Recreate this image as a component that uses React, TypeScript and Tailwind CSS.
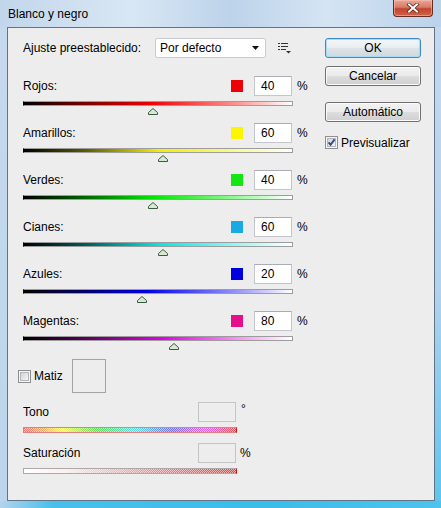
import React from "react";

type Row = { label: string; value: number; swatch: string; grad: string };

const rows: Row[] = [
  { label: "Rojos:", value: 40, swatch: "bg-[#ec0008]", grad: "bg-[linear-gradient(to_right,#000_0%,#6a0000_20%,#f00000_47%,#ff8c8c_78%,#fff_100%)]" },
  { label: "Amarillos:", value: 60, swatch: "bg-[#fbf500]", grad: "bg-[linear-gradient(to_right,#000_0%,#5a5600_22%,#f2ee00_50%,#fbf98c_78%,#fff_100%)]" },
  { label: "Verdes:", value: 40, swatch: "bg-[#14e614]", grad: "bg-[linear-gradient(to_right,#000_0%,#005800_20%,#00e600_48%,#9cf89c_80%,#fff_100%)]" },
  { label: "Cianes:", value: 60, swatch: "bg-[#1aa9e2]", grad: "bg-[linear-gradient(to_right,#000_0%,#005656_22%,#00e6e6_50%,#98f8f8_80%,#fff_100%)]" },
  { label: "Azules:", value: 20, swatch: "bg-[#0000dc]", grad: "bg-[linear-gradient(to_right,#000_0%,#00005e_20%,#0000e6_46%,#9898fa_80%,#fff_100%)]" },
  { label: "Magentas:", value: 80, swatch: "bg-[#e6108a]", grad: "bg-[linear-gradient(to_right,#000_0%,#560056_22%,#e600e6_52%,#f8a0f8_82%,#fff_100%)]" },
];

function Thumb({ value }: { value: number }) {
  const frac = (value + 200) / 500;
  return (
    <div className="relative h-[7px] mt-[2px] w-[270px]">
      <svg
        className="absolute top-0"
        style={{ left: Math.round(frac * 270 - 5) }}
        width="10"
        height="7"
        viewBox="0 0 10 7"
      >
        <path d="M5 0.5 L9.5 4.5 V6.5 H0.5 V4.5 Z" fill="#d6ead2" stroke="#3c5a40" />
      </svg>
    </div>
  );
}

function CheckBox({ checked, id }: { checked?: boolean; id: string }) {
  return (
    <svg width="13" height="13" viewBox="0 0 13 13" className="shrink-0">
      <defs>
        <linearGradient id={id} x1="0" y1="0" x2="1" y2="1">
          <stop offset="0" stopColor="#cfd3d8" />
          <stop offset="1" stopColor="#f6f6f6" />
        </linearGradient>
      </defs>
      <rect x="0.5" y="0.5" width="12" height="12" fill="#f5f5f5" stroke="#8f8f8f" />
      <rect x="2.5" y="2.5" width="8" height="8" fill={`url(#${id})`} stroke="#b4b6b9" />
      {checked && (
        <path d="M3.6 6.3 L5.6 8.8 L9.6 3.4" fill="none" stroke="#304a8c" strokeWidth="1.9" />
      )}
    </svg>
  );
}

function Button({ label, primary }: { label: string; primary?: boolean }) {
  return (
    <div
      className={
        primary
          ? "h-[20px] w-[96px] flex items-center justify-center rounded-[3px] border border-[#3c8ccc] shadow-[inset_0_0_0_1px_#a8dcf6] bg-[linear-gradient(to_bottom,#f4f6f8_0%,#eaedf0_48%,#dde3e8_52%,#cfd8df_100%)]"
          : "h-[20px] w-[96px] flex items-center justify-center rounded-[3px] border border-[#707070] shadow-[inset_0_0_0_1px_#fbfbfb] bg-[linear-gradient(to_bottom,#f2f2f2_0%,#ebebeb_48%,#dddddd_52%,#cfcfcf_100%)]"
      }
    >
      <span className="text-[12px] leading-none text-black">{label}</span>
    </div>
  );
}

function SliderBlock({ row }: { row: Row }) {
  return (
    <div className="flex flex-col mb-[8px]">
      <div className="flex items-center h-[20px] w-[284px]">
        <span className="flex-1 text-[12px] text-black">{row.label}</span>
        <div className={`w-[12px] h-[12px] ${row.swatch}`} />
        <div className="ml-[11px] w-[38px] h-[20px] bg-white border border-[#c3c7cd] border-t-[#abadb3] flex items-center pl-[6px] text-[12px] text-black">
          {row.value}
        </div>
        <span className="ml-[5px] w-[10px] text-[12px] text-black">%</span>
      </div>
      <div className={`mt-[5px] h-[5px] w-[270px] border border-[#9d9d9d] border-l-black ${row.grad}`} />
      <Thumb value={row.value} />
    </div>
  );
}

function HueBar() {
  return (
    <div className="relative w-[214px] h-[6px] border border-[#e08080] border-r-[#c81818] bg-[linear-gradient(to_right,#f07070_0%,#f4f060_18%,#60e060_35%,#60e0e0_52%,#7070f4_70%,#f060f0_86%,#e85050_100%)]">
      <div className="absolute inset-0 bg-[repeating-conic-gradient(rgba(255,255,255,0.55)_0_25%,transparent_0_50%)] bg-[length:2px_2px]" />
    </div>
  );
}

function SatBar() {
  return (
    <div className="relative w-[214px] h-[6px] border border-[#b0a8a8] border-r-[#c41818] bg-[linear-gradient(to_right,#ffffff_0%,#fbeaea_20%,#e89090_60%,#d84848_100%)]">
      <div className="absolute inset-0 bg-[repeating-conic-gradient(rgba(255,255,255,0.55)_0_25%,transparent_0_50%)] bg-[length:2px_2px]" />
    </div>
  );
}

export default function App() {
  return (
    <div className="w-[441px] h-[508px] flex flex-col overflow-hidden font-['Liberation_Sans',Arial,sans-serif] bg-[linear-gradient(to_right,#c2d6eb_0%,#d8e7f4_30%,#bdd3ea_52%,#d4e4f3_74%,#bad2ea_100%)]">
      {/* Title bar */}
      <div className="h-[27px] flex items-start shrink-0">
        <div className="flex-1 h-[27px] flex items-center pl-[8px]">
          <span className="text-[12px] text-black">Blanco y negro</span>
        </div>
        <div className="mr-[8px] w-[40px] h-[17px] rounded-b-[4px] border border-t-0 border-[#6b2a22] bg-[linear-gradient(to_bottom,#e8a898_0%,#d87a66_45%,#c2442e_55%,#d0634a_100%)] shadow-[inset_0_0_0_1px_rgba(255,200,190,0.5)] flex items-center justify-center">
          <svg width="14" height="10" viewBox="0 0 14 10">
            <path d="M3 1.5 L11 8.5 M11 1.5 L3 8.5" stroke="#5a1d14" strokeWidth="3.4" strokeLinecap="square" />
            <path d="M3 1.5 L11 8.5 M11 1.5 L3 8.5" stroke="#ffffff" strokeWidth="2" strokeLinecap="square" />
          </svg>
        </div>
      </div>

      {/* Middle */}
      <div className="flex h-[474px] shrink-0">
        <div className="w-[7px] bg-[linear-gradient(to_bottom,#c6d9ec,#bcd5ec)]" />
        <div className="w-[428px] h-[474px] border border-[#627489] bg-[#ededed] pl-[15px] pt-[10px] flex">
          {/* Left column */}
          <div className="w-[284px] flex flex-col">
            <div className="flex items-center h-[20px]">
              <span className="w-[132px] text-[12px] text-black">Ajuste preestablecido:</span>
              <div className="w-[111px] h-[20px] bg-white border border-[#c8cbd0] rounded-[2px] flex items-center pl-[4px] pr-[6px]">
                <span className="flex-1 text-[12px] text-black">Por defecto</span>
                <svg width="7" height="4" viewBox="0 0 7 4">
                  <path d="M0 0 H7 L3.5 4 Z" fill="#111" />
                </svg>
              </div>
              <svg width="13" height="11" viewBox="0 0 13 11" className="ml-[12px]">
                <rect x="0" y="0" width="2" height="1" fill="#333" />
                <rect x="3" y="0" width="7" height="1" fill="#333" />
                <rect x="0" y="3" width="2" height="1" fill="#333" />
                <rect x="3" y="3" width="7" height="1" fill="#333" />
                <rect x="0" y="6" width="2" height="1" fill="#333" />
                <rect x="3" y="6" width="5" height="1" fill="#333" />
                <path d="M8 8 H13 L10.5 10.5 Z" fill="#333" />
              </svg>
            </div>

            <div className="mt-[18px] flex flex-col">
              {rows.map((r) => (
                <SliderBlock key={r.label} row={r} />
              ))}
            </div>

            {/* Matiz */}
            <div className="mt-[1px] ml-[-5px] flex items-center h-[34px]">
              <CheckBox id="cbMatiz" />
              <span className="ml-[3px] w-[38px] text-[12px] text-black">Matiz</span>
              <div className="w-[34px] h-[34px] border border-[#a3a3a3]" />
            </div>

            {/* Tono */}
            <div className="mt-[9px] flex items-center h-[20px]">
              <span className="w-[175px] text-[12px] text-black">Tono</span>
              <div className="w-[38px] h-[20px] border border-[#c4c4c4] bg-[#ededed]" />
              <span className="ml-[5px] self-start text-[12px] leading-[14px] text-black">°</span>
            </div>
            <div className="mt-[5px]">
              <HueBar />
            </div>

            {/* Saturación */}
            <div className="mt-[10px] flex items-center h-[20px]">
              <span className="w-[175px] text-[12px] text-black">Saturación</span>
              <div className="w-[38px] h-[20px] border border-[#c4c4c4] bg-[#ededed]" />
              <span className="ml-[4px] text-[12px] text-black">%</span>
            </div>
            <div className="mt-[5px]">
              <SatBar />
            </div>
          </div>

          {/* Right column */}
          <div className="ml-[18px] w-[96px] flex flex-col">
            <Button label="OK" primary />
            <div className="mt-[8px]">
              <Button label="Cancelar" />
            </div>
            <div className="mt-[16px]">
              <Button label="Automático" />
            </div>
            <div className="mt-[14px] flex items-center h-[13px]">
              <CheckBox id="cbPrev" checked />
              <span className="ml-[3px] text-[12px] text-black">Previsualizar</span>
            </div>
          </div>
        </div>
        <div className="w-[6px] bg-[linear-gradient(to_bottom,#c4d8ec_0%,#b4d2ec_55%,#5ec6ec_100%)]" />
      </div>

      {/* Bottom frame */}
      <div className="flex-1 bg-[linear-gradient(to_right,#b4d4ec_0%,#46c0ea_12%,#3bbde9_60%,#4cc4ec_100%)]" />
    </div>
  );
}
